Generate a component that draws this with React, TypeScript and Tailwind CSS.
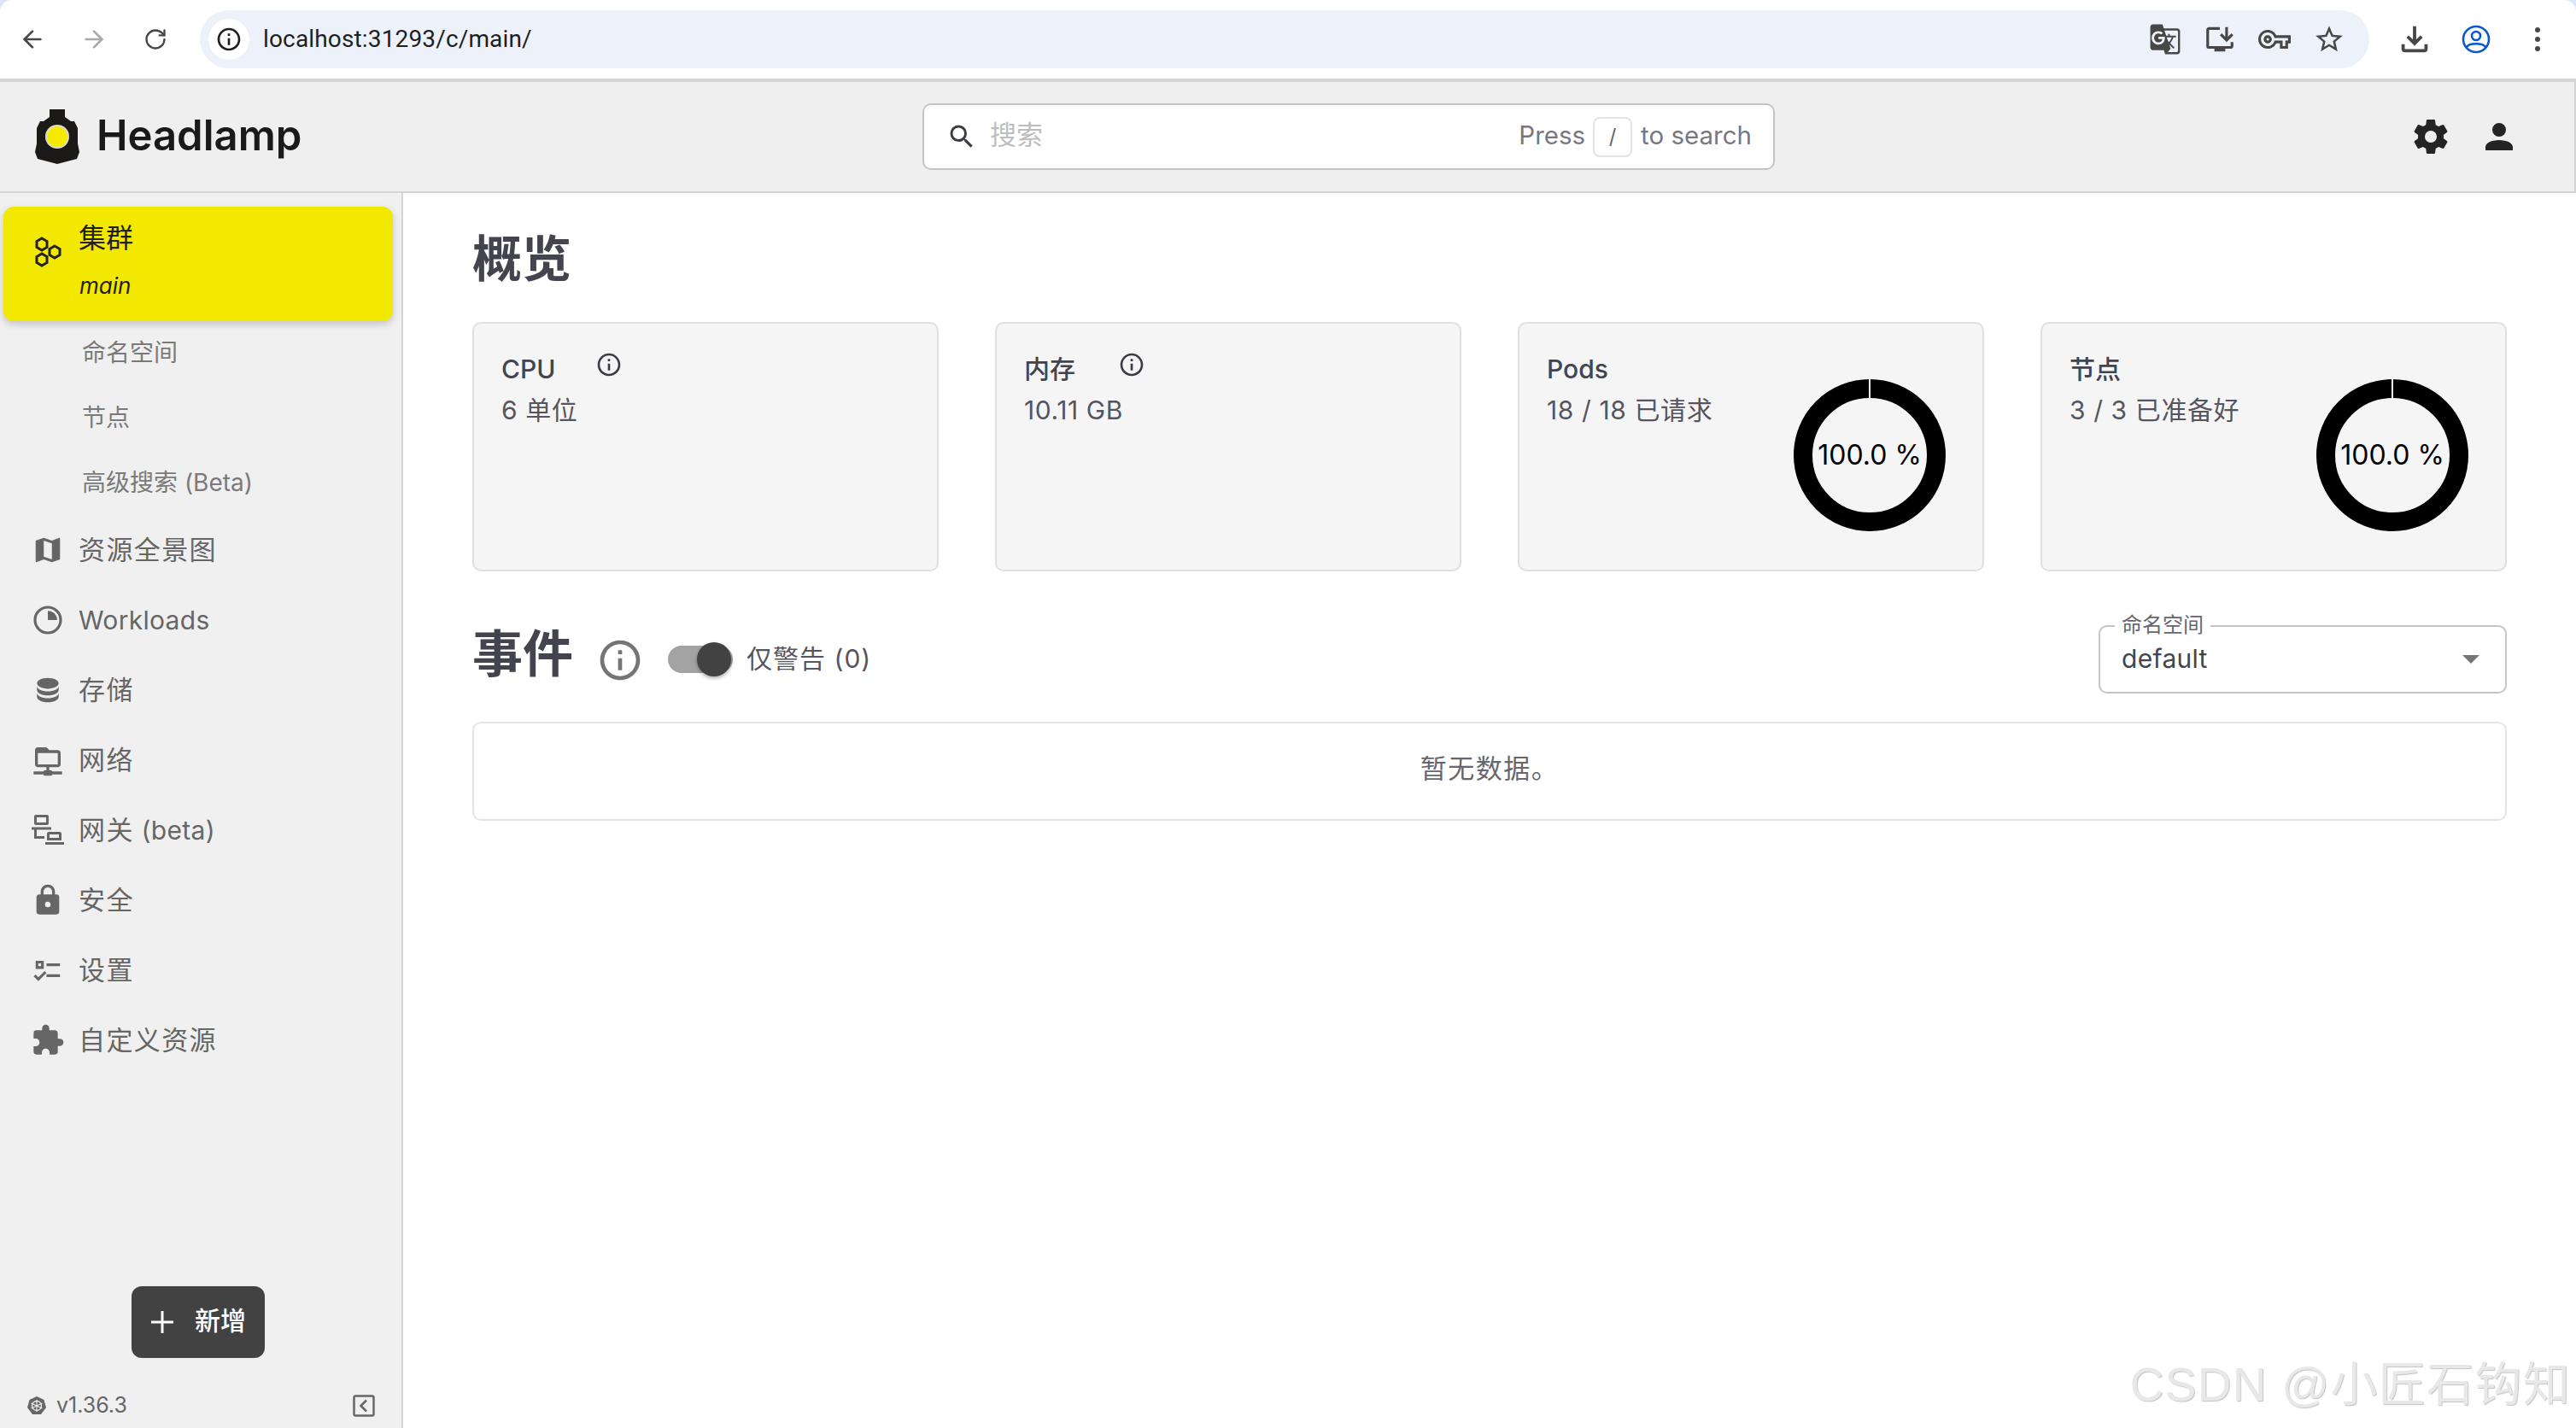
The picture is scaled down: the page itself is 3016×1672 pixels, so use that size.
import { ArrowLeft, ArrowRight, RotateCw } from 'lucide-react';
import {
  MdGTranslate,
  MdInfoOutline,
  MdOutlineInstallDesktop,
  MdOutlineStarBorder,
  MdOutlineVpnKey,
  MdOutlineFileDownload,
} from 'react-icons/md';
import type { ReactNode } from 'react';

const P = {
  account: 'M12,4A4,4 0 0,1 16,8A4,4 0 0,1 12,12A4,4 0 0,1 8,8A4,4 0 0,1 12,4M12,14C16.42,14 20,15.79 20,18V20H4V18C4,15.79 7.58,14 12,14Z',
  cog: 'M12,15.5A3.5,3.5 0 0,1 8.5,12A3.5,3.5 0 0,1 12,8.5A3.5,3.5 0 0,1 15.5,12A3.5,3.5 0 0,1 12,15.5M19.43,12.97C19.47,12.65 19.5,12.33 19.5,12C19.5,11.67 19.47,11.34 19.43,11L21.54,9.37C21.73,9.22 21.78,8.95 21.66,8.73L19.66,5.27C19.54,5.05 19.27,4.96 19.05,5.05L16.56,6.05C16.04,5.66 15.5,5.32 14.87,5.07L14.5,2.42C14.46,2.18 14.25,2 14,2H10C9.75,2 9.54,2.18 9.5,2.42L9.13,5.07C8.5,5.32 7.96,5.66 7.44,6.05L4.95,5.05C4.73,4.96 4.46,5.05 4.34,5.27L2.34,8.73C2.21,8.95 2.27,9.22 2.46,9.37L4.57,11C4.53,11.34 4.5,11.67 4.5,12C4.5,12.33 4.53,12.65 4.57,12.97L2.46,14.63C2.27,14.78 2.21,15.05 2.34,15.27L4.34,18.73C4.46,18.95 4.73,19.03 4.95,18.95L7.44,17.94C7.96,18.34 8.5,18.68 9.13,18.93L9.5,21.58C9.54,21.82 9.75,22 10,22H14C14.25,22 14.46,21.82 14.5,21.58L14.87,18.93C15.5,18.67 16.04,18.34 16.56,17.94L19.05,18.95C19.27,19.03 19.54,18.95 19.66,18.73L21.66,15.27C21.78,15.05 21.73,14.78 21.54,14.63L19.43,12.97Z',
  map: 'M15,19L9,16.89V5L15,7.11M20.5,3C20.44,3 20.39,3 20.34,3L15,5.1L9,3L3.36,4.9C3.15,4.97 3,5.15 3,5.38V20.5A0.5,0.5 0 0,0 3.5,21C3.55,21 3.61,21 3.66,20.97L9,18.9L15,21L20.64,19.1C20.85,19 21,18.85 21,18.62V3.5A0.5,0.5 0 0,0 20.5,3Z',
  database: 'M12,3C7.58,3 4,4.79 4,7C4,9.21 7.58,11 12,11C16.42,11 20,9.21 20,7C20,4.79 16.42,3 12,3M4,9V12C4,14.21 7.58,16 12,16C16.42,16 20,14.21 20,12V9C20,11.21 16.42,13 12,13C7.58,13 4,11.21 4,9M4,14V17C4,19.21 7.58,21 12,21C16.42,21 20,19.21 20,17V14C20,16.21 16.42,18 12,18C7.58,18 4,16.21 4,14Z',
  folderNet: 'M15 20C15 19.45 14.55 19 14 19H13V17H19C20.11 17 21 16.11 21 15V7C21 5.89 20.11 5 19 5H13L11 3H5C3.89 3 3 3.89 3 5V15C3 16.11 3.89 17 5 17H11V19H10C9.45 19 9 19.45 9 20H2V22H9C9 22.55 9.45 23 10 23H14C14.55 23 15 22.55 15 22H22V20H15M5 15V7H19V15H5Z',
  lock: 'M12,17A2,2 0 0,0 14,15C14,13.89 13.1,13 12,13A2,2 0 0,0 10,15A2,2 0 0,0 12,17M18,8A2,2 0 0,1 20,10V20A2,2 0 0,1 18,22H6A2,2 0 0,1 4,20V10C4,8.89 4.9,8 6,8H7V6A5,5 0 0,1 12,1A5,5 0 0,1 17,6V8H18M12,3A3,3 0 0,0 9,6V8H15V6A3,3 0 0,0 12,3Z',
  checks: 'M3,5H9V11H3V5M5,7V9H7V7H5M11,7H21V9H11V7M11,15H21V17H11V15M5,20L1.5,16.5L2.91,15.09L5,17.17L9.59,12.59L11,14L5,20Z',
  puzzle: 'M20.5,11H19V7C19,5.89 18.1,5 17,5H13V3.5A2.5,2.5 0 0,0 10.5,1A2.5,2.5 0 0,0 8,3.5V5H4A2,2 0 0,0 2,7V10.8H3.5C5,10.8 6.2,12 6.2,13.5C6.2,15 5,16.2 3.5,16.2H2V20A2,2 0 0,0 4,22H7.8V20.5C7.8,19 9,17.8 10.5,17.8C12,17.8 13.2,19 13.2,20.5V22H17A2,2 0 0,0 19,20V16H20.5A2.5,2.5 0 0,0 23,13.5A2.5,2.5 0 0,0 20.5,11Z',
};

function Mdi({ d, className }: { d: string; className?: string }) {
  return (
    <svg viewBox="0 0 24 24" fill="currentColor" className={className}>
      <path d={d} />
    </svg>
  );
}

function SliceIcon() {
  return (
    <svg viewBox="0 0 24 24" className="w-[40px] h-[40px]">
      <circle cx="12" cy="12" r="9" fill="none" stroke="currentColor" strokeWidth="1.9" />
      <path d="M12 5.5A6.5 6.5 0 0 1 18.5 12H12Z" fill="currentColor" />
    </svg>
  );
}

function GatewayIcon() {
  return (
    <svg viewBox="0 0 38 38" className="w-[38px] h-[38px]" fill="currentColor">
      <path d="M5 1h13a2 2 0 0 1 2 2v8a2 2 0 0 1-2 2H5a2 2 0 0 1-2-2V3a2 2 0 0 1 2-2Zm1 3v6h11V4Z" />
      <rect x="0" y="15.5" width="23" height="3" />
      <path d="M3 18h3v8h9v3H3Z" />
      <path d="M20 21h13a2 2 0 0 1 2 2v8H18v-8a2 2 0 0 1 2-2Zm1 3v4h11v-4Z" />
      <rect x="16" y="33" width="22" height="3" />
    </svg>
  );
}

function ClusterIcon() {
  const hex = (cx: number, cy: number) =>
    `${cx},${cy - 7} ${cx + 6},${cy - 3.5} ${cx + 6},${cy + 3.5} ${cx},${cy + 7} ${cx - 6},${cy + 3.5} ${cx - 6},${cy - 3.5}`;
  return (
    <svg viewBox="0 0 32 36" className="w-[32px] h-[36px] shrink-0 mt-[34px]" fill="none" stroke="#222" strokeWidth="3">
      <polygon points={hex(9, 9)} />
      <polygon points={hex(9, 27)} />
      <polygon points={hex(24, 18)} />
    </svg>
  );
}

function LampLogo() {
  return (
    <svg viewBox="0 0 52 64" className="w-[52px] h-[64px] shrink-0">
      <path
        d="M17 0H35V9L42 14H46L50 22V40L52 50L49 58L26 64L3 58L0 50L2 40V22L6 14H10L17 9Z"
        fill="#1b1a17"
      />
      <ellipse cx="26" cy="32" rx="14" ry="14" fill="#dcdcd0" />
      <ellipse cx="26" cy="32" rx="12" ry="12" fill="#f5ea00" />
    </svg>
  );
}

function K8sIcon() {
  return (
    <svg viewBox="0 0 24 24" className="w-[24px] h-[24px]">
      <polygon points="12,1 20.5,5 23,14 17,22 7,22 1,14 3.5,5" fill="#666" />
      <circle cx="12" cy="12" r="5.5" fill="none" stroke="#f0f0f0" strokeWidth="1.3" />
      <path d="M12 5v14M5.5 9l13 6M18.5 9l-13 6" stroke="#f0f0f0" strokeWidth="1.1" />
    </svg>
  );
}

function CollapseIcon() {
  return (
    <svg viewBox="0 0 26 26" className="w-[26px] h-[26px]" fill="none" stroke="#666" strokeWidth="2.5">
      <rect x="1.5" y="1.5" width="23" height="23" rx="2" />
      <path d="M16 6.5L9.5 13L16 19.5" />
    </svg>
  );
}

function ChromeBar() {
  return (
    <div className="h-[96px] shrink-0 flex items-center bg-white rounded-t-[14px] border-b-4 border-[#d4d4d4] text-[#474747] pl-[22px] pr-[30px]">
      <ArrowLeft className="w-[32px] h-[32px]" strokeWidth={2} />
      <ArrowRight className="w-[32px] h-[32px] ml-[40px] text-[#a9a9a9]" strokeWidth={2} />
      <RotateCw className="w-[28px] h-[28px] ml-[42px]" strokeWidth={2} />
      <div className="ml-[38px] w-[2540px] h-[68px] rounded-full bg-[#ecf1fa] flex items-center pl-[10px] pr-[28px]">
        <div className="w-[48px] h-[48px] rounded-full bg-white flex items-center justify-center text-[#1f1f1f]">
          <MdInfoOutline className="w-[32px] h-[32px]" />
        </div>
        <span className="ml-[16px] text-[28px] tracking-[0.15px] text-[#1f1f1f] font-['Roboto',sans-serif]">localhost:31293/c/main/</span>
        <div className="ml-auto flex items-center gap-[26px]">
          <MdGTranslate className="w-[38px] h-[38px]" />
          <MdOutlineInstallDesktop className="w-[38px] h-[38px]" />
          <MdOutlineVpnKey className="w-[38px] h-[38px]" />
          <MdOutlineStarBorder className="w-[38px] h-[38px]" />
        </div>
      </div>
      <MdOutlineFileDownload className="w-[46px] h-[46px] ml-[30px]" />
      <svg viewBox="0 0 34 34" className="w-[34px] h-[34px] ml-[32px]" fill="none" stroke="#0b57d0" strokeWidth="2.6">
        <circle cx="17" cy="17" r="15" />
        <circle cx="17" cy="13" r="5" />
        <path d="M6 26c3-5 19-5 22 0" />
      </svg>
      <div className="ml-[52px] flex flex-col gap-[5px]">
        <span className="w-[6px] h-[6px] rounded-full bg-[#474747]" />
        <span className="w-[6px] h-[6px] rounded-full bg-[#474747]" />
        <span className="w-[6px] h-[6px] rounded-full bg-[#474747]" />
      </div>
    </div>
  );
}

function TopBar() {
  return (
    <header className="h-[130px] shrink-0 flex items-center bg-[#efefef] border-b-2 border-r-2 border-[#d4d4d4]">
      <div className="w-[1080px] pl-[41px] flex items-center gap-[20px]">
        <LampLogo />
        <span className="text-[49px] font-semibold text-[#1a1a1a] tracking-[0px] pb-[3px]">Headlamp</span>
      </div>
      <div className="w-[998px] h-[78px] rounded-[10px] bg-white border-2 border-[#c4c4c4] flex items-center pl-[26px] pr-[25px]">
        <svg viewBox="0 0 24 24" className="w-[36px] h-[36px] text-[#3c3c46]" fill="currentColor">
          <path d="M15.5 14h-.79l-.28-.27A6.47 6.47 0 0 0 16 9.5 6.5 6.5 0 1 0 9.5 16c1.61 0 3.09-.59 4.23-1.57l.27.28v.79l5 4.99L20.49 19l-4.99-5zm-6 0C7.01 14 5 11.99 5 9.5S7.01 5 9.5 5 14 7.01 14 9.5 11.99 14 9.5 14z" />
        </svg>
        <span className="ml-[15px] text-[31px] text-[#bdbdbd] pb-[4px]">搜索</span>
        <div className="ml-auto flex items-center text-[29.5px] text-[#77777f]">
          <span className="pb-[4px]">Press</span>
          <span className="ml-[9px] w-[46px] h-[47px] rounded-[8px] border-2 border-[#e4e4e4] flex items-center justify-center text-[24px] text-[#66666e]">/</span>
          <span className="ml-[10px] pb-[4px]">to search</span>
        </div>
      </div>
      <div className="ml-auto flex items-center text-[#242424] pr-[64px] gap-[32px]">
        <Mdi d={P.cog} className="w-[48px] h-[48px]" />
        <Mdi d={P.account} className="w-[48px] h-[48px]" />
      </div>
    </header>
  );
}

const navItems: { icon: ReactNode; label: string; latin?: string }[] = [
  { icon: <Mdi d={P.map} className="w-[38px] h-[38px]" />, label: '资源全景图' },
  { icon: <SliceIcon />, label: '', latin: 'Workloads' },
  { icon: <Mdi d={P.database} className="w-[38px] h-[38px]" />, label: '存储' },
  { icon: <Mdi d={P.folderNet} className="w-[40px] h-[40px]" />, label: '网络' },
  { icon: <GatewayIcon />, label: '网关', latin: ' (beta)' },
  { icon: <Mdi d={P.lock} className="w-[40px] h-[40px]" />, label: '安全' },
  { icon: <Mdi d={P.checks} className="w-[38px] h-[38px]" />, label: '设置' },
  { icon: <Mdi d={P.puzzle} className="w-[40px] h-[40px]" />, label: '自定义资源' },
];

function Sidebar() {
  return (
    <aside className="w-[472px] shrink-0 flex flex-col bg-[#f0f0f0] border-r-2 border-[#d4d4d4] pt-[16px]">
      <div className="ml-[4px] w-[456px] h-[134px] shrink-0 rounded-[12px] bg-[#f3e800] shadow-[0_4px_8px_rgba(0,0,0,0.18)] flex items-start pl-[36px] pt-[1px] text-[#1f1f1a]">
        <ClusterIcon />
        <div className="ml-[20px] pt-[16px] flex flex-col gap-[18px]">
          <span className="text-[32px] leading-[40px]">集群</span>
          <span className="text-[26px] leading-[36px] italic pl-[1px]">main</span>
        </div>
      </div>
      <div className="mt-[2px] flex flex-col gap-[6px] text-[28px] text-[#7a7a7a]">
        <div className="h-[70px] pl-[96px] flex items-center">命名空间</div>
        <div className="h-[70px] pl-[96px] flex items-center">节点</div>
        <div className="h-[70px] pl-[96px] flex items-center">高级搜索 (Beta)</div>
      </div>
      <nav className="mt-[3px] flex flex-col">
        {navItems.map((item) => (
          <div key={item.label + item.latin} className="h-[82px] flex items-center text-[#666] pl-[36px]">
            <span className="w-[40px] flex items-center justify-center">{item.icon}</span>
            <span className="ml-[16px] whitespace-pre">
              <span className="text-[31px] tracking-[1.4px]">{item.label}</span>
              <span className="text-[30px] tracking-[0.3px]">{item.latin}</span>
            </span>
          </div>
        ))}
      </nav>
      <button className="mt-auto ml-[154px] w-[156px] h-[84px] rounded-[12px] bg-[#424242] text-white flex items-center pl-[22px]">
        <svg viewBox="0 0 28 28" className="w-[28px] h-[28px]" stroke="currentColor" strokeWidth="3">
          <path d="M14 1v26M1 14h26" />
        </svg>
        <span className="ml-[24px] text-[30px] font-medium pb-[4px]">新增</span>
      </button>
      <div className="mt-[42px] mb-[12px] h-[28px] flex items-center pl-[31px] pr-[31px] text-[#666]">
        <K8sIcon />
        <span className="ml-[11px] text-[25px]">v1.36.3</span>
        <span className="ml-auto">
          <CollapseIcon />
        </span>
      </div>
    </aside>
  );
}

function CardText({ title, value, info }: { title: string; value: string; info?: boolean }) {
  return (
    <div className="flex flex-col">
      <div className="flex items-start h-[44px]">
        <span className="text-[30px] leading-[44px] font-medium text-[#44444f] w-[118px]">{title}</span>
        {info && <MdInfoOutline className="w-[32px] h-[32px] mt-[1px] -ml-[8px] text-[#3c3c46]" />}
      </div>
      <span className="mt-[4px] text-[30px] tracking-[0.6px] leading-[44px] text-[#55555f]">{value}</span>
    </div>
  );
}

function Donut() {
  return (
    <div className="relative w-[178px] h-[178px] flex items-center justify-center mt-[34px] shrink-0">
      <svg viewBox="0 0 178 178" className="absolute inset-0 w-full h-full">
        <circle cx="89" cy="89" r="78" fill="none" stroke="#000" strokeWidth="22" />
        <path d="M89 0V22" stroke="#f5f5f5" strokeWidth="2" />
      </svg>
      <span className="relative text-[32px] text-black whitespace-nowrap">100.0 %</span>
    </div>
  );
}

function Card({ children }: { children: ReactNode }) {
  return (
    <div className="h-[292px] rounded-[10px] bg-[#f5f5f5] border-2 border-[#e0e0e0] pl-[32px] pr-[43px] pt-[31px] flex justify-between">
      {children}
    </div>
  );
}

function Main() {
  return (
    <main className="flex-1 min-w-0 bg-white px-[81px]">
      <h1 className="h-[151px] flex items-center pt-[3px] text-[58px] font-bold text-[#44444f]">概览</h1>
      <div className="grid grid-cols-4 gap-[66px]">
        <Card>
          <CardText title="CPU" value="6 单位" info />
        </Card>
        <Card>
          <CardText title="内存" value="10.11 GB" info />
        </Card>
        <Card>
          <CardText title="Pods" value="18 / 18 已请求" />
          <Donut />
        </Card>
        <Card>
          <CardText title="节点" value="3 / 3 已准备好" />
          <Donut />
        </Card>
      </div>
      <div className="mt-[63px] h-[80px] flex items-center">
        <h2 className="text-[59px] font-bold text-[#44444f] -mt-[12px]">事件</h2>
        <MdInfoOutline className="ml-[27px] w-[56px] h-[56px] text-[#757575] mt-[2px]" />
        <div className="relative ml-[28px] w-[76px] h-[32px] rounded-full bg-[#a3a3a3]">
          <span className="absolute right-[2px] -top-[4px] w-[40px] h-[40px] rounded-full bg-[#424242] shadow-[0_2px_4px_rgba(0,0,0,0.35)]" />
        </div>
        <span className="ml-[16px] text-[30px] text-[#55555f] tracking-[1px] pb-[2px]">仅警告 (0)</span>
        <div className="relative ml-auto w-[478px] h-[80px] rounded-[10px] border-2 border-[#c4c4c4] flex items-center pl-[25px] pr-[30px]">
          <span className="absolute left-[17px] -top-[17px] bg-white px-[8px] text-[24px] leading-[30px] text-[#66666e]">命名空间</span>
          <span className="text-[30px] text-[#44444f] tracking-[0.3px] pb-[2px]">default</span>
          <span className="ml-auto w-0 h-0 border-x-[10px] border-x-transparent border-t-[10px] border-t-[#757575]" />
        </div>
      </div>
      <div className="mt-[33px] h-[116px] rounded-[10px] border-2 border-[#e4e4e4] flex items-center justify-center pb-[6px] text-[31px] tracking-[1.5px] text-[#66666e]">
        暂无数据。
      </div>
    </main>
  );
}

export default function App() {
  return (
    <div className="relative w-[3016px] h-[1672px] overflow-hidden flex flex-col bg-[#dbe6f8] font-['Inter','Noto_Sans_CJK_SC',sans-serif]">
      <ChromeBar />
      <TopBar />
      <div className="flex-1 min-h-0 flex">
        <Sidebar />
        <Main />
      </div>
      {/* CSDN watermark laid over the page */}
      <span className="absolute right-[6px] bottom-[16px] text-[55px] tracking-[1.3px] leading-[70px] text-[#e8e8e8] [text-shadow:1px_1px_1px_#c4c4c4] font-['Liberation_Sans','Noto_Sans_CJK_SC',sans-serif] whitespace-nowrap">
        CSDN @小匠石钩知
      </span>
    </div>
  );
}
